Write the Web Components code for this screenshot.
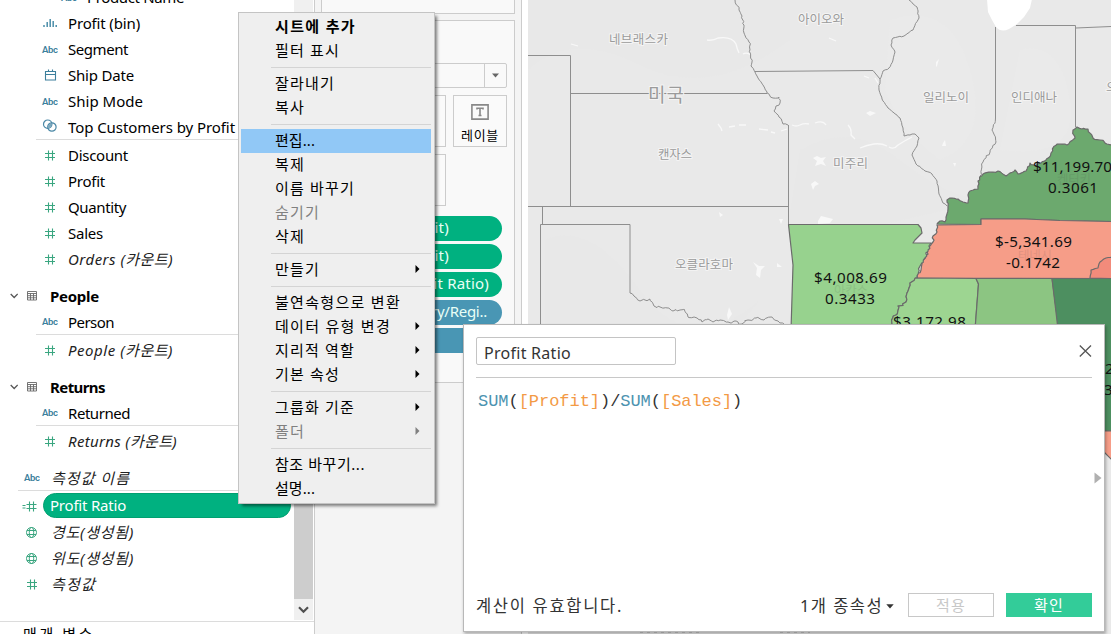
<!DOCTYPE html>
<html lang="ko">
<head>
<meta charset="utf-8">
<title>Profit Ratio</title>
<style>
html,body{margin:0;height:100%;overflow:hidden;background:#fff}
body{font-family:"Noto Sans","Noto Sans CJK KR",sans-serif;font-size:15px;color:#000}
</style>
</head>
<body>
<viz-app></viz-app>
<script>
const define=(name,html,init)=>customElements.define(name,class extends HTMLElement{
  constructor(){super();this.attachShadow({mode:'open'});}
  connectedCallback(){
    if(this.ready)return;this.ready=true;
    this.shadowRoot.innerHTML=typeof html==='function'?html(this):html;
    if(init)init(this);
  }
});

define('viz-app',`<style>
:host{display:flex;position:relative;width:1111px;height:634px;overflow:hidden;background:#fff}
sheet-map{flex:1;margin-left:6px}
context-menu{position:absolute;left:238px;top:12px;z-index:3}
calc-dialog{position:absolute;left:463px;top:324px;z-index:2}
</style>
<data-pane></data-pane><marks-pane></marks-pane><sheet-map></sheet-map>
<context-menu></context-menu><calc-dialog></calc-dialog>`);

const F=(icon,w,text,cls='')=>`<field-row icon="${icon}" class="${cls}"><fit-text w="${w}">${text}</fit-text></field-row>`;
define('data-pane',`<style>
:host{display:flex;flex-direction:column;width:314px;border-right:1px solid #ccc;box-sizing:content-box;height:634px;flex:none}
.body{display:flex;height:621px;overflow:hidden;flex:none}
.list{flex:1;margin-top:-16px}
.bar{width:19px;margin-right:1px;display:flex;flex-direction:column;background:#f0f0f0;height:620px}
.thumb{margin-top:60px;background:#cdcdcd;flex:1}
.down{height:21px;display:flex;align-items:center;justify-content:center}
.deep{--lead:60px}.root{--lead:23px;--gap:11px}
.line{border-bottom:1px solid #dcdcdc;margin-bottom:2px;height:26px;margin-left:36px;--lead:5px}
.line.root{margin-left:18px;--lead:5px}
.it{font-style:italic;color:#222}
.top{margin-top:11px}
.pill{--bg:#00b180;--bd:1px solid #00a070;color:#fff;--lead:22px;--gap:7px}
.foot{border-top:1px solid #dcdcdc;padding:0 0 0 23px;line-height:24px;height:12px;overflow:hidden}
</style>
<div class="body"><div class="list">
${F('abc',97,'Product Name','deep')}${F('bin',72,'Profit (bin)')}${F('abc',60,'Segment')}${F('cal',66,'Ship Date')}${F('abc',75,'Ship Mode')}${F('set',167,'Top Customers by Profit','line')}
${F('num',60,'Discount')}${F('num',37,'Profit')}${F('num',58,'Quantity')}${F('num',35,'Sales')}${F('num',105,'Orders (카운트)','it')}
<table-row><fit-text w="49">People</fit-text></table-row>
${F('abc',46,'Person','line')}${F('num',105,'People (카운트)','it')}
<table-row><fit-text w="55">Returns</fit-text></table-row>
${F('abc',62,'Returned','line')}${F('num',109,'Returns (카운트)','it')}
${F('abc',79,'측정값 이름','line root it top')}${F('calc',76,'Profit Ratio','pill')}${F('geo',83,'경도(생성됨)','root it')}${F('geo',83,'위도(생성됨)','root it')}${F('num',45,'측정값','root it')}
</div><div class="bar"><div class="thumb"></div><div class="down"><svg width="11" height="8" viewBox="0 0 11 8"><path d="M1 1.3 5.5 5.8 10 1.3" fill="none" stroke="#505050" stroke-width="2.2"/></svg></div></div></div>
<div class="foot"><fit-text w="72">매개 변수</fit-text></div>`);

const ICON={
 abc:'<text x="9" y="12.6" text-anchor="middle" font-size="9.500" font-weight="600" font-style="normal" textLength="16" font-family="Roboto,sans-serif" fill="#3c7f9c">Abc</text>',
 bin:'<path d="M3 13v-2M6.2 13V8M9.2 13V5M12.2 13V7M15.2 13v-2" stroke="#4b8ea9" stroke-width="1.5"/>',
 cal:'<path d="M4.5 5.5h10v8.500h-10zM4.5 8.500h10M7.500 5.500v-2M11.500 5.500v-2" fill="none" stroke="#3c7f9c" stroke-width="1.1"/>',
 set:'<g fill="none" stroke="#4b88a6" stroke-width="1.2"><circle cx="6.7" cy="7.2" r="4.200"/><circle cx="10.9" cy="10" r="4.200"/></g><path d="M6.8 10.7C7 8 8.5 6.3 10.6 6.2 11 9 9.5 11.2 6.8 10.7z" fill="#7ba8be"/>',
 num:'<path d="M4 7.500h10M4 11.500h10M7.500 4.500v10M11.500 4.500v10" stroke="#3aa680" stroke-width="1.1"/>',
 calc:'<path d="M.5 8.500h3M.5 11h3M4.5 7.500h10M4.5 11.500h10M7.5 4.500v10M11.5 4.500v10" stroke="#3aa680" stroke-width="1.1"/>',
 geo:'<g fill="none" stroke="#3aa680" stroke-width="1"><circle cx="8.5" cy="9.500" r="5"/><ellipse cx="8.5" cy="9.500" rx="2.2" ry="5"/><path d="M4 7.500h9M4 11.500h9"/></g>'};
define('field-row',el=>`<style>
:host{display:flex;align-items:center;height:26px;padding-left:var(--lead,41px);box-sizing:border-box}
svg{display:block;margin-right:var(--gap,10px);flex:none;width:17px;margin-top:-1px}
.t{display:flex;align-items:center;white-space:nowrap;line-height:24px}
:host(.pill) .t{height:25px;width:248px;box-sizing:border-box;border:var(--bd);background:var(--bg);border-radius:13px;padding-left:6px;margin:-2px 0 0 -3px}
</style><svg width="17" height="18" viewBox="0 0 17 18">${ICON[el.getAttribute('icon')]}</svg><div class="t"><slot></slot></div>`);

define('table-row',`<style>
:host{display:flex;align-items:center;height:26px;margin-top:11px;padding-left:10px;font-weight:700}
.c{width:8px;margin-right:9px}.g{width:10px;margin-right:13px}
</style><svg class="c" height="6" viewBox="0 0 8 6"><path d="M.7 1 4.2 4.5 7.7 1" fill="none" stroke="#555" stroke-width="1.3"/></svg>
<svg class="g" height="10" viewBox="0 0 10 10"><path d="M.5.5h9v8.500h-9zM.5 2.500h9M.5 4.700h9M.5 6.800h9M3.500 2.500V9M6.500 2.500V9" fill="none" stroke="#666" stroke-width=".9"/></svg><slot></slot>`);

define('marks-pane',`<style>
:host{display:flex;flex-direction:column;height:634px;flex:none;background:#f4f4f4;border-right:1px solid #ccc;padding-left:6px;box-sizing:content-box;width:200px;overflow:hidden}
.card{width:194px;box-sizing:border-box;border:1px solid #ccc;background:#f9f9f9;flex:none}
.a{height:14px;border-top:0;margin-bottom:6px}
.b{height:363px;display:flex;flex-direction:column;padding:42px 7px 0 7px}
.sel{height:25px;box-sizing:border-box;border:1px solid #ccc;border-radius:2px;display:flex;justify-content:flex-end}
.sel i{width:21px;border-left:1px solid #ccc;display:flex;align-items:center;justify-content:center}
.grid{display:grid;grid-template-columns:repeat(3,54px);gap:7px 7px;justify-content:end;margin-top:7px}
.cell{height:52px;box-sizing:border-box;border:1px solid #ccc;background:#fafafa;display:flex;flex-direction:column;align-items:center;font-size:13px;line-height:20px}
.cell svg{margin:8px 0 5px}
.pills{display:flex;flex-direction:column;gap:3px;margin:10px 5px 0 0}
</style><div class="card a"></div><div class="card b">
<div class="sel"><i><svg width="7" height="5"><path d="M0 .5h7L3.500 4.500z" fill="#666"/></svg></i></div>
<div class="grid"><div class="cell"></div><div class="cell"></div><div class="cell"><svg width="18" height="16" viewBox="0 0 18 16"><path d="M.9.9h16.200v14.200H.9z" fill="none" stroke="#888" stroke-width="1.600"/><path d="M6 5.500V4.300h6v1.200M9 4.300v7.200M7.500 11.500h3" fill="none" stroke="#888" stroke-width="1.600"/></svg><fit-text w="38">레이블</fit-text></div><div class="cell"></div><div class="cell"></div></div>
<div class="pills"><mark-pill><fit-text w="20">fit)</fit-text></mark-pill><mark-pill><fit-text w="20">fit)</fit-text></mark-pill><mark-pill class="r"><fit-text w="61">fit Ratio)</fit-text></mark-pill><mark-pill class="blue"><fit-text w="56">ry/Regi..</fit-text></mark-pill><mark-pill class="blue"></mark-pill></div>
</div>`);
define('mark-pill',`<style>:host{display:flex;align-items:center;justify-content:flex-end;box-sizing:border-box;height:25px;border-radius:13px;background:#00b180;color:#e8fff6;padding:0 53px 2px 0;line-height:23px}
:host(.r){padding-right:13px}:host(.blue){background:#4996b4;padding-right:15px}</style><slot></slot>`);

/* Subdivides a coarse outline with small repeatable offsets for river banks. */
let seed=7;const rnd=()=>{seed=(seed*16807)%2147483647;return seed/2147483647-.5;};
const rough=(s,amt=2.2)=>{const p=s.trim().split(/\s+/).map(q=>q.split(',').map(Number));let o='';
 p.forEach((a,i)=>{if(i){const b=p[i-1],n=Math.max(1,Math.round(Math.hypot(a[0]-b[0],a[1]-b[1])/2.4));
  for(let k=1;k<n;k++){o+=`${(b[0]+(a[0]-b[0])*k/n+rnd()*amt).toFixed(1)},${(b[1]+(a[1]-b[1])*k/n+rnd()*amt).toFixed(1)} `;}}
  o+=a.join(',')+' ';});return o;};
const kyTop=rough('937,224 940,221 945,222 947,214 948,206 947,200 952,198 958,199 963,202 968,203 968,195 970,191 978,189 978,181 983,174 993,172 998,171 1006,176 1015,170 1018,174 1026,171 1030,163 1036,166 1046,160 1051,153 1057,144 1067,145 1075,138 1073,130 1077,127 1082,129 1088,129 1093,138 1100,140 1107,144 1112,144',2);
const tnW=rough('937,225 937,232 933,236 933,242 929,247 926,255 922,262 921,270 918,273 917,278',2.6);
const msW=rough('917,278 910,283 908,291 906,302 898,306 896,315 892,324 892,330',3.4);
const lab=(x,y,w,t,fs=12.500)=>`<text x="${x}" y="${y}" textLength="${w}" font-size="${fs}">${t}</text>`;
define('sheet-map',()=>`<style>:host{display:block;height:634px;background:#e9e9e9;overflow:hidden}svg{display:block}
.l{fill:none;stroke:#8e8e8e;stroke-width:1}.s{stroke:#6b6b6b;stroke-width:1.200;stroke-linejoin:round}
.g{fill:#9b9b9b;stroke:#f4f4f4;stroke-width:2;paint-order:stroke}.w{fill:none;stroke:#f8f8f8;stroke-width:1.300}.v{fill:#111;font-size:15.200px}</style>
<svg width="583" height="634" viewBox="528 0 583 634">
<path d="M528 70Q570 30 640 65T790 40V0H528zM800 150Q850 120 900 160T990 200L880 225H788zM545 240Q590 220 640 290T760 300L740 324H545z" fill="#e8e8e8"/>
<path d="M890 20Q950 0 970 70T940 160Q900 130 885 90zM1020 50Q1060 40 1070 100T1000 150z" fill="#eaeaea"/>
<path class="w" d="M707 40q6 1 11 -2q14 -2 18 6q1 5 3 9m4 1q4 -2 8 1M571 44l7 2M718 124l3 4 1 3M729 127l6 -1m4 -1l7 0M759 129l9 1m3 2l4 1m6 -2l6 -2M792 125q4 2 8 0t9 -1m6 -1q8 -3 11 2M848 125q4 4 3 10l4 4M860 148q7 -3 14 -4t13 2m2 1q5 3 9 -2q8 -5 14 -8M864 76l5 2m6 0l3 5M829 38l7 3"/>
<path d="M813 158l4 -2 4 2 5 -1 -3 4 3 5-5 -2-6 2 2-5zM811 184l4 -3 4 3-4 2-2 4zM818 221l3-5 4 1 8 2-3 4-12 1zM866 113l4-2 6 2-6 3zM943 143l2-3 1 6-4 0zM953 163l3 0-1 4zM936 62l3-3-2 7-1 1zM753 262l6 4 6 0-4 4-1 8-4-3 1-7zM777 263l5 4-5 0zM779 219l4 0-2 5zM719 212l4 3-3 2zM729 307l3 7-4 6-1-5z" fill="#f8f8f8"/>
<path d="M987 -1L988 12 992 20 996 27Q1001 33 1009 29L1017 24 1024 17 1030 8 1032 -1z" fill="#fff"/>
<path class="l" d="M528 55.500H570.500V206.500M570.500 93.500H767M528 206.500H788M542.500 206V224M540.500 324V224.500H630V293M788.500 125V224.500M755 71.500 873 70.500 880 79M995.500 27V118M1016 25.500H1075.500V127M1076 28 1111 26.500"/>
<polyline class="l" points="${rough('735,0 739,10 742,16 744,25 744,33 749,42 750,50 752,62 751,66 755,72 758,78 763,85 767,93 773,98 779,97 780,103 776,106 774,111 779,117 783,124 788,125')}"/>
<polyline class="l" points="${rough('630,293 634,296 640,301 645,300 650,299 654,306 664,308 673,311 680,310 684,309 688,317 697,318 702,322 708,319 713,322 720,320 728,322 738,322 742,324 748,320 756,318 764,320 771,317 778,321 784,324',2.800)}"/>
<polyline class="l" points="${rough('909,0 917,7 919,18 913,30 904,36 893,38 891,45 895,52 893,60 889,68 883,71 880,79 879,90 882,99 888,108 900,118 903,128 904,136 910,135 915,134 919,138 917,146 912,155 916,164 925,171 932,174 937,181 939,194 943,203 947,206',1.100)}"/>
<polyline class="l" points="${rough('995.500,118 992,130 996,142 990,152 983,162 980,176')}"/>
<g class="g">${lab(609,43.500,59,'네브래스카')}${lab(648,102,36,'미국',19)}${lab(658,158.500,34,'캔자스')}${lab(675,268.500,58,'오클라호마')}${lab(798,23.500,46,'아이오와')}${lab(833,167.500,35,'미주리')}${lab(923,101.500,46,'일리노이')}${lab(1011,101.500,46,'인디애나')}${lab(1106,91.500,46,'오하이오')}</g>
<polygon class="s" fill="#6ca96e" points="${kyTop}1112,221.500 1060,220.500 1025,219 981,219 981,224.500"/>
<polygon class="s" fill="#f69d88" points="${tnW}1112,278.500 1112,221.500 1060,220.500 1025,219 981,219 981,224.500"/>
<polygon class="s" fill="#f28b7b" points="${rough('1090,278 1091,270 1098,268 1100,262 1106,258 1112,257',.8)}1112,278.500"/>
<polygon class="s" fill="#97d28e" points="788.500,224.500 918,224.500 921,228 922,233 915,240 913,243 931,243 ${rough('931,243 928,250 925,258 920,266 918,274 917,278')}${msW}791,330 793,265"/>
<polygon class="s" fill="#9dd591" points="${msW}975,330 978.500,284 976,278.500"/>
<polygon class="s" fill="#8cc582" points="976,278.500 1052,278.500 1059,330 975,330 978.500,284"/>
<polygon class="s" fill="#4d8f60" points="1052,278.500 1112,278.500 1112,431 1070,431"/>
<path class="s" fill="#f69d88" d="M1070 431h42v29l-8-8z"/>
<path d="M640 632h60M780 632h30" stroke="#aaa" stroke-dasharray="3 4"/>
<g fill="#444" opacity=".12">${lab(1057,184,34,'켄터키')}${lab(1018,260,34,'테네시')}${lab(834,295,34,'아칸소')}</g>
<g class="v"><text x="1033" y="171.500" textLength="79">$11,199.70</text><text x="1048" y="193" textLength="50">0.3061</text><text x="995" y="247" textLength="77">$-5,341.69</text><text x="1006" y="268" textLength="54">-0.1742</text><text x="814" y="283" textLength="73">$4,008.69</text><text x="825" y="304" textLength="50">0.3433</text><text x="893" y="327" textLength="73">$3,172.98</text><text x="1105" y="374">2</text><text x="1104" y="395">3</text></g>
</svg>`);

const M=(w,t,c='')=>`<menu-item class="${c}"><fit-text w="${w}">${t}</fit-text></menu-item>`;
define('context-menu',`<style>
:host{display:block;box-sizing:border-box;width:197px;height:492px;padding:2px 3px 2px 2px;background:#efefef;border:1px solid #c4c4c4;box-shadow:3px 3px 3px -1px rgba(0,0,0,.5)}
hr{border:0;border-top:1px solid #d4d4d4;margin:4px 0 4px 30px}
</style>
${M(81,'시트에 추가','b')}${M(65,'필터 표시')}<hr>${M(60,'잘라내기')}${M(30,'복사')}<hr>${M(40,'편집...','on')}${M(30,'복제')}${M(80,'이름 바꾸기')}${M(45,'숨기기','off')}${M(30,'삭제')}<hr>${M(45,'만들기','sub')}<hr>${M(126,'불연속형으로 변환')}${M(116,'데이터 유형 변경','sub')}${M(80,'지리적 역할','sub')}${M(65,'기본 속성','sub')}<hr>${M(80,'그룹화 기준','sub')}${M(30,'폴더','sub off')}<hr>${M(90,'참조 바꾸기...')}${M(40,'설명...')}`);
define('menu-item',`<style>
:host{display:flex;align-items:center;justify-content:space-between;box-sizing:border-box;height:24px;line-height:22px;padding:0 11px 2px 34px}
:host(.b){font-weight:700}:host(.on){background:#91c8f6}:host(.off){color:#808080}
svg{display:none}:host(.sub) svg{display:block}
</style><slot></slot><svg width="5" height="8"><path d="M.5 0 4.500 4 .5 8z" fill="currentColor"/></svg>`);

define('calc-dialog',`<style>
:host{display:flex;flex-direction:column;box-sizing:border-box;width:642px;height:308px;padding:12px 12px 14px;background:#fff;border:1px solid #b8b8b8;box-shadow:1px 2px 3px rgba(0,0,0,.3);color:#333}
header{display:flex;justify-content:space-between;height:40px;border-bottom:1px solid #c8c8c8;align-items:flex-start}
.in{width:200px;height:28px;box-sizing:border-box;border:1px solid #c4c4c4;border-radius:2px;padding-left:7px;line-height:30px;font-size:16px}
header svg{margin-top:8px}
.main{flex:1;display:flex;justify-content:space-between}
.code{font:17px/20px "Liberation Mono",monospace;letter-spacing:-.04px;margin:14px 0 0 2px;white-space:nowrap;color:#333}
.code b{font-weight:400;color:#4c93b0}.code i{font-style:normal;color:#f39a45}
.tri{margin:94px -10px 0 0;align-self:flex-start}
footer{display:flex;align-items:center;height:24px;font-size:16.500px;line-height:24px}
footer>fit-text,.dep{padding-top:2px}
footer .dep{margin-left:auto;display:flex;align-items:center}
.dep svg{margin:0 14px 0 3px}
.btn{width:86px;height:24px;box-sizing:border-box;border:1px solid #c8c8c8;color:#c8c8c8;display:flex;align-items:center;justify-content:center;font-size:15px}
.ok{background:#33cc99;border-color:#33cc99;color:#fff;margin-left:12px}
</style>
<header><div class="in"><fit-text w="87">Profit Ratio</fit-text></div><svg width="13" height="12" viewBox="0 0 13 12"><path d="M.8.5 12 11.500M12 .5.8 11.500" stroke="#555" stroke-width="1.300"/></svg></header>
<div class="main"><div class="code"><b>SUM</b>(<i>[Profit]</i>)/<b>SUM</b>(<i>[Sales]</i>)</div><svg class="tri" width="8" height="12"><path d="M.5.500 7.500 6 .5 11.500z" fill="#b0b0b0"/></svg></div>
<footer><fit-text w="147">계산이 유효합니다.</fit-text><div class="dep"><fit-text w="83">1개 종속성</fit-text><svg width="8" height="5"><path d="M.3.300h7.400L4 4.500z" fill="#333"/></svg></div><div class="btn"><fit-text w="30">적용</fit-text></div><div class="btn ok"><fit-text w="30">확인</fit-text></div></footer>`);

/* Spreads its text over a given advance width by letter spacing. */
define('fit-text','<style>:host{display:inline-block;white-space:nowrap;flex:none}</style><slot></slot>',el=>{
  const w=+el.getAttribute('w'),n=[...el.textContent].length;
  el.style.letterSpacing=((w-el.getBoundingClientRect().width)/n).toFixed(3)+'px';
});
</script>
</body>
</html>
